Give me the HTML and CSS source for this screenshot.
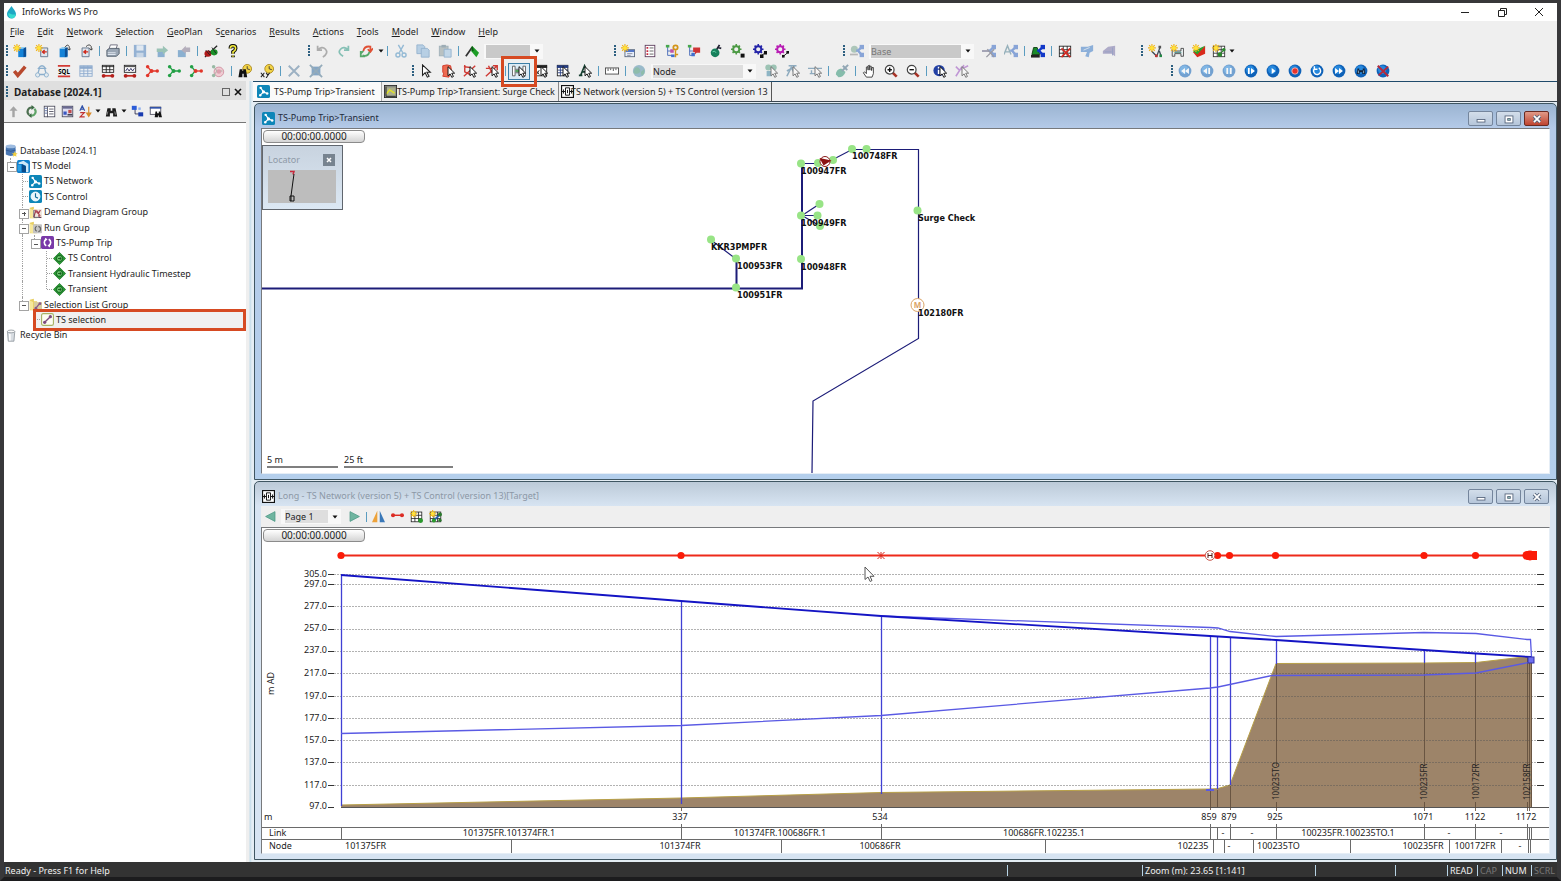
FILE: index.html
```html
<!DOCTYPE html>
<html lang="en">
<head>
<meta charset="utf-8">
<title>InfoWorks WS Pro</title>
<link rel="stylesheet" href="styles.css">
</head>
<body>
<svg class="defs" aria-hidden="true">
  <defs>
    <symbol id="p-star" viewBox="0 0 16 16"><path d="M4.500 0v9M0 4.500h9M1.300 1.300l6.400 6.400M7.700 1.300L1.300 7.700" stroke="#f0b418" stroke-width="1.300"/><circle cx="4.500" cy="4.500" r="2.300" fill="#ffe23a"/></symbol>
    <symbol id="p-cur" viewBox="0 0 16 16"><path d="M8 3v10.500l2.400-2.200 1.900 3.900 1.900-.9-1.900-3.800h3.300z" fill="#fff" stroke="#111" stroke-width="1.100"/></symbol>
    <symbol id="p-cyl" viewBox="0 0 16 16"><path d="M6 5h9v10H6z" fill="#1583d8"/><path d="M6 5l3-1.500h6L12 5z" fill="#8fd0f5"/><path d="M12 5l3-1.500V14l-3 1z" fill="#0b4f96"/></symbol>
    <symbol id="p-box" viewBox="0 0 16 16"><path d="M6.500 4.500h8v10h-8z" fill="#dfe6ee" stroke="#5b6f86"/><path d="M8.500 9h5M11 7l-2.500 2L11 11" stroke="#d02a1c" stroke-width="1.500" fill="none"/></symbol>
    <symbol id="p-dumb" viewBox="0 0 16 16"><path d="M3 13.500h10" stroke="#c92a22" stroke-width="2"/><circle cx="3" cy="13.500" r="2.200" fill="#b3201c"/><circle cx="13" cy="13.500" r="2.200" fill="#b3201c"/></symbol>
    <symbol id="p-share" viewBox="0 0 16 16"><path d="M14 3L9 7.500l5 5.500M9 7.500h-2" stroke="currentColor" stroke-width="2.600" fill="none"/><rect x="11" y="1" width="5" height="5" fill="currentColor"/><rect x="11" y="10" width="5" height="5" fill="currentColor"/></symbol>
    <symbol id="p-gear" viewBox="0 0 16 16"><circle cx="6" cy="6" r="3.500" fill="none" stroke="currentColor" stroke-width="2.200"/><path d="M6 0v3M6 9v3M0 6h3M9 6h3M1.800 1.800l2 2M8.200 8.200l2 2M10.200 1.800l-2 2M1.800 10.200l2-2" stroke="currentColor" stroke-width="1.800"/></symbol>
    <symbol id="p-grid" viewBox="0 0 16 16"><rect x="1.500" y="2.500" width="13" height="12" fill="#fff" stroke="currentColor"/><path d="M1.500 6.500h13M1.500 10.500h13M6 2.500v12M10.500 2.500v12" stroke="currentColor"/></symbol>
    <symbol id="p-bino" viewBox="0 0 16 16"><path d="M3 4h4v3h2V4h4l2 10h-5v-4H6v4H1z" fill="#1c1c1c"/><path d="M3.500 8l-1 4M12 8l.8 4" stroke="#9a9a9a"/></symbol>
    <symbol id="p-ball" viewBox="0 0 16 16"><circle cx="8" cy="8" r="7.300" fill="#0f62b8"/><circle cx="7" cy="6.500" r="4.800" fill="#2688dd"/></symbol>

    <symbol id="i-drop" viewBox="0 0 16 16"><path d="M8 0c2 3.500 5.500 6 5.500 10A5.500 5.500 0 0 1 2.500 10C2.500 6 6 3.500 8 0z" fill="#1fa8c4"/><path d="M4 9c2-1 5 3 9 1a5.400 5.400 0 0 1-3 5c-4 1-6-2-6-6z" fill="#36dcd0"/></symbol>
    <symbol id="i-newdb" viewBox="0 0 16 16"><use href="#p-cyl"/><use href="#p-star"/></symbol>
    <symbol id="i-newbox" viewBox="0 0 16 16"><use href="#p-box"/><use href="#p-star"/></symbol>
    <symbol id="i-opendb" viewBox="0 0 16 16"><use href="#p-cyl" x="-3"/><path d="M9 4q3-5 5-1v4M12 5l2 2 2-2" stroke="#333" fill="none"/></symbol>
    <symbol id="i-openbox" viewBox="0 0 16 16"><use href="#p-box" x="-3"/><path d="M8 3q4-4 6 0v4M12 5l2 2 2-2" stroke="#333" fill="none"/></symbol>
    <symbol id="i-print" viewBox="0 0 16 16"><path d="M5 1h8l-2 6H3z" fill="#fff" stroke="#667"/><path d="M1 7l3-2h11v6l-3 3H1z" fill="#9aa6b4" stroke="#4c5866"/><path d="M2 10h9M2 12h9" stroke="#e8eef6"/></symbol>
    <symbol id="i-save" viewBox="0 0 16 16"><rect x="1" y="1" width="14" height="14" fill="#4a80bd"/><rect x="4" y="1.500" width="8" height="6" fill="#d4e3f3"/><rect x="4" y="10" width="8" height="5" fill="#a9c2df"/></symbol>
    <symbol id="i-imp" viewBox="0 0 16 16"><path d="M3 7h8v8H3z" fill="#3b7db8"/><path d="M2 5h7V2l6 5-6 5V9H2z" fill="#58a089"/></symbol>
    <symbol id="i-exp" viewBox="0 0 16 16"><path d="M1 7h9v8H1z" fill="#3b7db8"/><path d="M15 4h-5V2L5 7l5 4V9h5z" fill="#857a92"/></symbol>
    <symbol id="i-plug" viewBox="0 0 16 16"><path d="M1 15L15 2" stroke="#222" stroke-width="1.500"/><ellipse cx="4.500" cy="11" rx="4" ry="3.500" fill="#b01818"/><ellipse cx="11.500" cy="9.500" rx="4" ry="3.500" fill="#1a9128"/><path d="M2 7l5 6M9 4l5 7M5 7l3 4" stroke="#222"/></symbol>
    <symbol id="i-help" viewBox="0 0 16 16"><path d="M5 5q0-3 3-3t3 3q0 2-3 4v2M8 13v2" stroke="#111" stroke-width="4.200" fill="none"/><path d="M5 5q0-3 3-3t3 3q0 2-3 4v2M8 13v1.500" stroke="#f5ec3a" stroke-width="1.800" fill="none"/></symbol>
    <symbol id="i-undo" viewBox="0 0 16 16"><path d="M3 2v5h5M3 7q5-5 9-1t-3 9" stroke="currentColor" stroke-width="2" fill="none"/></symbol>
    <symbol id="i-redo" viewBox="0 0 16 16"><path d="M13 2v5H8M13 7Q8 2 4 6t3 8" stroke="currentColor" stroke-width="2" fill="none"/></symbol>
    <symbol id="i-undoredo" viewBox="0 0 16 16"><path d="M5 8q1-6 8-5v5M10 6l3 3 3-4" stroke="#e05035" stroke-width="2" fill="none"/><path d="M12 9q-2 6-8 4M2 8v6h5M2 11l3-3" stroke="#56a96a" stroke-width="2" fill="none"/></symbol>
    <symbol id="i-cut" viewBox="0 0 16 16"><path d="M5 1l5 9M11 1L6 10" stroke="#4a8fc0" stroke-width="1.600"/><circle cx="4.500" cy="12.500" r="2.300" fill="none" stroke="#4a8fc0" stroke-width="1.600"/><circle cx="11.500" cy="12.500" r="2.300" fill="none" stroke="#4a8fc0" stroke-width="1.600"/></symbol>
    <symbol id="i-copy" viewBox="0 0 16 16"><path d="M1 1h7l2 2v8H1z" fill="#8bb6dc" stroke="#4a80b4"/><path d="M6 5h7l2 2v8H6z" fill="#8bb6dc" stroke="#4a80b4"/></symbol>
    <symbol id="i-paste" viewBox="0 0 16 16"><rect x="1.500" y="2.500" width="10" height="11" fill="#8e9c9c" stroke="#5f7f8f"/><rect x="4" y="1" width="5" height="3" fill="#597787"/><path d="M7 6h8v9H7z" fill="#9cc3e2" stroke="#4a80b4"/></symbol>
    <symbol id="i-peak" viewBox="0 0 16 16"><path d="M1 14L8 4" stroke="#333" stroke-width="2"/><path d="M8 2l8 8-3 5-6-7z" fill="#1d9d26"/><path d="M8 3l1 5" stroke="#0b5b12" stroke-width="2"/></symbol>
    <symbol id="i-starwin" viewBox="0 0 16 16"><rect x="4.500" y="6.500" width="11" height="8" fill="#e6eefa" stroke="#56657c"/><path d="M5 8h10" stroke="#3f66c0" stroke-width="2"/><path d="M7 11h6M7 13h4" stroke="#889"/><use href="#p-star"/></symbol>
    <symbol id="i-form" viewBox="0 0 16 16"><rect x="2.500" y="1.500" width="11" height="13" fill="#fff" stroke="#5a3a5a"/><path d="M4 4.500h2M4 8h2M4 11.500h2" stroke="#c7283c" stroke-width="2"/><path d="M7.500 4.500h4.500M7.500 8h4.500M7.500 11.500h4.500" stroke="#555"/></symbol>
    <symbol id="i-treekey" viewBox="0 0 16 16"><path d="M3 3v10h5M3 8h4" stroke="#4468b8" fill="none"/><rect x="1" y="1" width="4" height="3" fill="#46a84c"/><rect x="6" y="6" width="4" height="4" fill="#c052a8"/><rect x="7" y="12" width="4" height="3" fill="#3f6fd0"/><circle cx="12" cy="4" r="2.500" fill="none" stroke="#d39418" stroke-width="2"/><path d="M12 7v8M12 12h3" stroke="#d39418" stroke-width="1.600"/></symbol>
    <symbol id="i-treered" viewBox="0 0 16 16"><path d="M3 3v10h5M3 8h4" stroke="#4468b8" fill="none"/><rect x="1" y="1" width="4" height="3" fill="#46a84c"/><rect x="5" y="10" width="4" height="4" fill="#3f6fd0"/><path d="M7 4h8v6h-4l-2 2V9H7z" fill="#cf3434"/></symbol>
    <symbol id="i-flask" viewBox="0 0 16 16"><circle cx="7" cy="10" r="5" fill="#17805c"/><path d="M9 6l3-5M10 4l4 1" stroke="#223" stroke-width="2"/><path d="M4 9q3-2 4 1" stroke="#6ee0b4" fill="none"/></symbol>
    <symbol id="i-gear1" viewBox="0 0 16 16"><use href="#p-gear" color="#4c9a44"/><rect x="11" y="11" width="4.500" height="4.500" fill="#111"/></symbol>
    <symbol id="i-gear2" viewBox="0 0 16 16"><use href="#p-gear" color="#2424a8"/><path d="M9 13.500l6-4" stroke="#111"/><rect x="8" y="12" width="4" height="4" fill="#111"/><rect x="12.500" y="8" width="3.500" height="4" fill="#111"/></symbol>
    <symbol id="i-gear3" viewBox="0 0 16 16"><use href="#p-gear" color="#b81cb4"/><path d="M9 14.500l6-5" stroke="#111"/><rect x="8" y="12.500" width="3" height="3" fill="#111"/><rect x="13" y="8" width="3" height="3" fill="#111"/></symbol>
    <symbol id="i-sc1" viewBox="0 0 16 16"><circle cx="5" cy="6" r="4" fill="#76a58e"/><path d="M0 12h9" stroke="#888" stroke-width="2"/><use href="#p-share" color="#3468c4"/></symbol>
    <symbol id="i-sc2" viewBox="0 0 16 16"><path d="M0 8h8" stroke="#557" stroke-width="2"/><use href="#p-share" color="#3468c4"/><path d="M6 6l8 9M14 6l-9 9" stroke="#556" stroke-width="1.500"/></symbol>
    <symbol id="i-sc3" viewBox="0 0 16 16"><path d="M0 12L4 2l4 10M2 9h5" stroke="#4f7f92" stroke-width="1.600" fill="none"/><use href="#p-share" color="#3468c4"/></symbol>
    <symbol id="i-sc4" viewBox="0 0 16 16"><path d="M1 12l2-8h4l3 8z" fill="#1a8a2a" stroke="#0b3c10"/><path d="M0 14h10" stroke="#222" stroke-width="3"/><use href="#p-share" color="#1238c8"/></symbol>
    <symbol id="i-gridx" viewBox="0 0 16 16"><use href="#p-grid" color="#222"/><path d="M4 5l10 10M14 5L4 15" stroke="#d32a22" stroke-width="2"/></symbol>
    <symbol id="i-brush1" viewBox="0 0 16 16"><path d="M1 3h8l6-2v7l-4 2-1 5-4-1 2-5H1z" fill="#3c7cc8"/><path d="M4 7l7-3" stroke="#cde"/></symbol>
    <symbol id="i-brush2" viewBox="0 0 16 16"><path d="M1 8l6-5 8-1v12l-4-3H1z" fill="#7a74aa"/><path d="M3 9h8M12 4v9" stroke="#4f62a2"/></symbol>
    <symbol id="i-starv" viewBox="0 0 16 16"><path d="M4 8l6 6 4-11M13 8l2 6" stroke="#3c4c58" stroke-width="1.500" fill="none"/><rect x="12" y="2" width="3" height="3" fill="#555"/><rect x="8" y="12" width="3" height="3" fill="#b33"/><rect x="13" y="12" width="3" height="3" fill="#284"/><use href="#p-star"/></symbol>
    <symbol id="i-starpipe" viewBox="0 0 16 16"><path d="M2.500 6v8h3v-3h7v3h3V5h-3v3h-7V6z" stroke="#444" fill="#e8eef0"/><path d="M5 9.500h8" stroke="#2a7a70"/><use href="#p-star"/></symbol>
    <symbol id="i-starleaf" viewBox="0 0 16 16"><path d="M1 9l5 6 9-4V2l-7 6z" fill="#d92a1c"/><path d="M1 8l5 4 9-10-7 3z" fill="#2aa32c"/><use href="#p-star"/></symbol>
    <symbol id="i-stargrid" viewBox="0 0 16 16"><use href="#p-grid" color="#333"/><path d="M10 10l4-3" stroke="#161" stroke-width="1"/><circle cx="9" cy="12" r="2.500" fill="#2a8a2c"/><circle cx="13.500" cy="6.500" r="2" fill="#2a8a2c"/><use href="#p-star"/></symbol>
    <symbol id="i-stargrid1" viewBox="0 0 16 16"><use href="#p-grid" color="#222"/><circle cx="13" cy="13" r="3" fill="#2a9a2c"/><use href="#p-star"/></symbol>
    <symbol id="i-stargrid2" viewBox="0 0 16 16"><use href="#p-grid" color="#222"/><path d="M6 13l7-7" stroke="#2a62b0" stroke-width="2.500"/><circle cx="6" cy="13" r="2.500" fill="#2a9a2c"/><circle cx="13.500" cy="5.500" r="2.500" fill="#2a7a2c"/><circle cx="13.500" cy="12.500" r="2" fill="#2a7a2c"/><use href="#p-star"/></symbol>

    <symbol id="i-check" viewBox="0 0 16 16"><path d="M1.500 8l4 5L14 3" stroke="#b8492e" stroke-width="4" fill="none"/></symbol>
    <symbol id="i-trinode" viewBox="0 0 16 16"><path d="M5 5L3 12h10L11 5zM4 5q4-6 8 0z" stroke="#3a7ab0" stroke-width="1.500" fill="none"/><circle cx="3" cy="12.500" r="2.400" fill="#dbe9f2" stroke="#3a7ab0"/><circle cx="13" cy="12.500" r="2.400" fill="#dbe9f2" stroke="#3a7ab0"/></symbol>
    <symbol id="i-sql" viewBox="0 0 16 16"><path d="M1 2h14M1 14h14" stroke="#d23a34" stroke-width="2"/><text x="8" y="11" text-anchor="middle" class="glyph7">SQL</text></symbol>
    <symbol id="i-table" viewBox="0 0 16 16"><rect x="1" y="2" width="14" height="12" fill="#e6eff8" stroke="#3f74b4"/><path d="M1 4h14" stroke="#3f74b4" stroke-width="3"/><path d="M1 8h14M1 11h14M5.500 2v12M10 2v12" stroke="#3f74b4"/></symbol>
    <symbol id="i-griddumb" viewBox="0 0 16 16"><rect x="1.500" y="1.500" width="13" height="8" fill="#fff" stroke="#222"/><path d="M1 3h14M2 6.500h12M6 2v8M10 2v8" stroke="#222"/><use href="#p-dumb"/></symbol>
    <symbol id="i-wavedumb" viewBox="0 0 16 16"><rect x="1.500" y="1.500" width="13" height="8" fill="#fff" stroke="#222"/><path d="M2 3h12" stroke="#222"/><path d="M3 8l2-3 2 3 2-3 2 3 2-3" stroke="#225" fill="none"/><use href="#p-dumb"/></symbol>
    <symbol id="i-nodesr" viewBox="0 0 16 16"><path d="M3 3l4 5-4 5M7 8h7" stroke="#e2362a" stroke-width="1.500" fill="none"/><g fill="#e2362a"><circle cx="3" cy="3" r="2"/><circle cx="3" cy="13" r="2"/><circle cx="7.500" cy="8" r="2.200"/><circle cx="14" cy="8" r="2"/></g></symbol>
    <symbol id="i-nodesg" viewBox="0 0 16 16"><path d="M3 3l4 5-4 5M7 8h7" stroke="#22a045" stroke-width="1.500" fill="none"/><g fill="#22a045"><circle cx="3" cy="3" r="2"/><circle cx="3" cy="13" r="2"/><circle cx="7.500" cy="8" r="2.200"/><circle cx="14" cy="8" r="2"/></g></symbol>
    <symbol id="i-nodesm" viewBox="0 0 16 16"><path d="M3 3l4 5-4 5" stroke="#22a045" stroke-width="1.500" fill="none"/><path d="M7 8h7" stroke="#e2362a" stroke-width="1.500"/><g fill="#22a045"><circle cx="3" cy="3" r="2"/><circle cx="3" cy="13" r="2"/></g><g fill="#e2362a"><circle cx="7.500" cy="8" r="2.200"/><circle cx="14" cy="8" r="2"/></g></symbol>
    <symbol id="i-pink" viewBox="0 0 16 16"><circle cx="9" cy="9" r="5.500" fill="#f0cbd2" stroke="#cf8f9f"/><path d="M3 3l4 5-4 5M7 8h6" stroke="#9fae9f" fill="none"/><g fill="#98b9a4"><circle cx="3" cy="3" r="2"/><circle cx="3" cy="13" r="2"/></g><circle cx="9" cy="8.500" r="2.500" fill="#db9fae"/></symbol>
    <symbol id="i-binoclock" viewBox="0 0 16 16"><circle cx="10.500" cy="5.500" r="5" fill="#f3d447" stroke="#a8851a"/><path d="M10.500 2.500v3l3 1" stroke="#333" fill="none"/><path d="M2 6h3v2h1V6h3l1.500 9H6.500v-4H5v4H.5z" fill="#111"/></symbol>
    <symbol id="i-xyclock" viewBox="0 0 16 16"><circle cx="10.500" cy="5.500" r="5" fill="#f3d447" stroke="#a8851a"/><path d="M10.500 2.500v3l3 1" stroke="#333" fill="none"/><path d="M1 10l4 5M5 10l-4 5M7 10l2 3M11 10l-4 6" stroke="#222" stroke-width="1.200"/></symbol>
    <symbol id="i-x" viewBox="0 0 16 16"><path d="M2 2l12 12M14 2L2 14" stroke="#5a7fa0" stroke-width="2.200"/></symbol>
    <symbol id="i-xsq" viewBox="0 0 16 16"><rect x="3" y="3" width="10" height="10" fill="#2f6ca4"/><path d="M1 1l14 14M15 1L1 15" stroke="#4a7490" stroke-width="2"/></symbol>
    <symbol id="i-cursor" viewBox="0 0 16 16"><path d="M4 1v12l3-3 2.500 5 2-1L9 9.500h4z" fill="#fff" stroke="#222" stroke-width="1.200"/></symbol>
    <symbol id="i-selpoly" viewBox="0 0 16 16"><path d="M2 2q5-2 9 0l1 5-3 8-7-1q2-3 0-5z" fill="#ee6a50" stroke="#cf3424"/><use href="#p-cur"/></symbol>
    <symbol id="i-sell1" viewBox="0 0 16 16"><path d="M1 14L14 2M1 3l7 1M2 1v8l6 3" stroke="#cf3a34" stroke-width="1.600" fill="none"/><use href="#p-cur"/></symbol>
    <symbol id="i-sell2" viewBox="0 0 16 16"><path d="M1 14L14 2M1 5h7M4 2l4 8M9 2h5v5" stroke="#cf3a34" stroke-width="1.600" fill="none"/><use href="#p-cur"/></symbol>
    <symbol id="i-long" viewBox="0 0 16 16"><path d="M.5 2.500h3v11h-3zM12.500 2.500h3v11h-3z" fill="#fff" stroke="#555"/><path d="M4 6h8M4 10h8" stroke="#555"/><path d="M4 8h8" stroke="#3d9a46" stroke-width="2"/><use href="#p-cur"/></symbol>
    <symbol id="i-gridcur" viewBox="0 0 16 16"><rect x="1.500" y="1.500" width="13" height="12" fill="#fff" stroke="#222"/><path d="M1 3h14" stroke="#222" stroke-width="3"/><path d="M3 8l3 4M6 7l-3 5" stroke="#222"/><use href="#p-cur"/></symbol>
    <symbol id="i-tabcur" viewBox="0 0 16 16"><rect x="1.500" y="1.500" width="12" height="12" fill="#fff" stroke="#222"/><path d="M1 3h13" stroke="#253c80" stroke-width="3"/><path d="M2 7h12M2 10h12M5 2v12M9 2v12" stroke="#253c80"/><use href="#p-cur"/></symbol>
    <symbol id="i-acur" viewBox="0 0 16 16"><path d="M1 13h4M3 13L7.500 2 12 13M5 9h5" stroke="#163f30" stroke-width="1.800" fill="none"/><use href="#p-cur"/></symbol>
    <symbol id="i-ruler" viewBox="0 0 16 16"><rect x="0.500" y="4.500" width="15" height="7" fill="#fff" stroke="#444"/><path d="M3.500 5v3M6.500 5v2M9.500 5v3M12.500 5v2" stroke="#444"/></symbol>
    <symbol id="i-globe" viewBox="0 0 16 16"><circle cx="8" cy="8" r="7" fill="#5590ac"/><path d="M3 5q4-3 6 1t-3 5-4-3zM10 9l4-3v5l-3 2z" fill="#3f9474"/></symbol>
    <symbol id="i-t1" viewBox="0 0 16 16"><circle cx="5" cy="4" r="3.500" fill="#5aa084"/><circle cx="11" cy="4" r="3.500" fill="#5aa084"/><rect x="3" y="8" width="6" height="6" fill="#3f86a4"/><use href="#p-cur"/></symbol>
    <symbol id="i-t2" viewBox="0 0 16 16"><path d="M1 14L6 4l4 7M3 2h9M1 8l9-5" stroke="#3f7498" stroke-width="1.800" fill="none"/><use href="#p-cur"/></symbol>
    <symbol id="i-t3" viewBox="0 0 16 16"><path d="M0 5h16M2 11h8M4 11V7" stroke="#3f7498" stroke-width="1.600"/><use href="#p-cur"/></symbol>
    <symbol id="i-clean" viewBox="0 0 16 16"><path d="M1 12q0-6 6-7l5 4q-2 6-8 6z" fill="#2f9474"/><path d="M8 8l7-7M9 2l5 5" stroke="#456c84" stroke-width="2.200"/></symbol>
    <symbol id="i-hand" viewBox="0 0 16 16"><path d="M5 15l-3.500-5 1.500-1 2 2V3.500l1.500-.5.500 4V2l1.500-.5L9 7V2.500l1.500 0L11 7.500 11.500 4H13v7l-1.500 4z" fill="#fff" stroke="#333"/></symbol>
    <symbol id="i-zin" viewBox="0 0 16 16"><path d="M9.500 9.500l5 5" stroke="#a83226" stroke-width="3"/><circle cx="6.500" cy="6.500" r="5" fill="#fff" stroke="#444" stroke-width="1.400"/><path d="M4 6.500h5M6.500 4v5" stroke="#111" stroke-width="1.600"/></symbol>
    <symbol id="i-zout" viewBox="0 0 16 16"><path d="M9.500 9.500l5 5" stroke="#a83226" stroke-width="3"/><circle cx="6.500" cy="6.500" r="5" fill="#fff" stroke="#444" stroke-width="1.400"/><path d="M4 6.500h5" stroke="#111" stroke-width="1.600"/></symbol>
    <symbol id="i-info" viewBox="0 0 16 16"><circle cx="7" cy="7.500" r="6.500" fill="#2340a4"/><path d="M6.500 3v2M6.500 6.500v5" stroke="#fff" stroke-width="2"/><use href="#p-cur"/></symbol>
    <symbol id="i-purp" viewBox="0 0 16 16"><path d="M1 14L8 3M1 3l4 4M10 1l-2 6M9 5l6-3" stroke="#9a4fc0" stroke-width="1.800"/><use href="#p-cur"/></symbol>
    <symbol id="i-rw" viewBox="0 0 16 16"><use href="#p-ball"/><path d="M8 4.500v7L3.500 8zM12.500 4.500v7L8 8z" fill="#fff"/></symbol>
    <symbol id="i-bk" viewBox="0 0 16 16"><use href="#p-ball"/><path d="M8 4.500v7L3.500 8zM9.500 4.500h2v7h-2z" fill="#fff"/></symbol>
    <symbol id="i-pause" viewBox="0 0 16 16"><use href="#p-ball"/><path d="M5 4.500h2v7H5zM9 4.500h2v7H9z" fill="#fff"/></symbol>
    <symbol id="i-step" viewBox="0 0 16 16"><use href="#p-ball"/><path d="M4.500 4.500h2v7h-2zM8 4.500v7L12.500 8z" fill="#fff"/></symbol>
    <symbol id="i-play" viewBox="0 0 16 16"><use href="#p-ball"/><path d="M6.500 4.500v7L11 8z" fill="#fff"/></symbol>
    <symbol id="i-rec" viewBox="0 0 16 16"><use href="#p-ball"/><circle cx="8" cy="8" r="3.600" fill="#e8332c" stroke="#f7b8b4"/></symbol>
    <symbol id="i-loop" viewBox="0 0 16 16"><use href="#p-ball"/><path d="M10 4.500A4 4 0 1 1 5 5.500M5 2.500v3.500h3.500" stroke="#fff" stroke-width="1.600" fill="none"/></symbol>
    <symbol id="i-ff" viewBox="0 0 16 16"><use href="#p-ball"/><path d="M3.500 4.500v7L8 8zM8 4.500v7L12.500 8z" fill="#fff"/></symbol>
    <symbol id="i-find" viewBox="0 0 16 16"><use href="#p-ball"/><path d="M4 5h2v2h4V5h2l1 6.500H9.500V9.500h-3v2H3z" fill="#14243c"/><path d="M5 7.500v3M11 7.500v3" stroke="#9bc"/></symbol>
    <symbol id="i-stop" viewBox="0 0 16 16"><use href="#p-ball"/><path d="M2 2l12 12M14 3L3 13" stroke="#b52a3c" stroke-width="2.200"/></symbol>

    <symbol id="i-up" viewBox="0 0 16 16"><path d="M8 15V6" stroke="#a5a5a5" stroke-width="3"/><path d="M3 7l5-5.500L13 7z" fill="#a5a5a5"/></symbol>
    <symbol id="i-refresh" viewBox="0 0 16 16"><path d="M9 3.200A5 5 0 0 0 5 12" stroke="#4d6f50" stroke-width="2.600" fill="none"/><path d="M7 13A5 5 0 0 0 11.500 4.500" stroke="#5fa468" stroke-width="2.600" fill="none"/><path d="M8 0l4 3-4 3zM8 10l-4 3 4 3z" fill="#3c6a44"/></symbol>
    <symbol id="i-list" viewBox="0 0 16 16"><rect x="1.500" y="1.500" width="13" height="13" fill="#fff" stroke="#445"/><path d="M5.500 2v13M7.500 5h5.500M7.500 8h5.500M7.500 11h5.500" stroke="#445"/><path d="M2 4h3M2 7h3M2 10h3" stroke="#4a62a0"/></symbol>
    <symbol id="i-cal" viewBox="0 0 16 16"><rect x="1.500" y="1.500" width="13" height="13" fill="#dcdcf0" stroke="#445"/><path d="M2 3h12" stroke="#6a6a90" stroke-width="3"/><path d="M3 8h4v4H3z" fill="#3a58c0"/><path d="M9 6h4v4H9z" fill="#c04a4a"/><path d="M8 12h6" stroke="#445" stroke-width="2"/></symbol>
    <symbol id="i-sort" viewBox="0 0 16 16"><path d="M1 7l3-6 3 6M2 5h4" stroke="#2f50a8" stroke-width="1.400" fill="none"/><path d="M1.500 9.500h5l-5 5h5.500" stroke="#c03434" stroke-width="1.500" fill="none"/><path d="M12 2v10M9.500 10l2.500 4 2.500-4z" stroke="#d88a2a" stroke-width="1.400" fill="#d88a2a"/></symbol>
    <symbol id="i-tree2" viewBox="0 0 16 16"><path d="M5 5v6h5" stroke="#224" fill="none"/><rect x="1" y="1" width="6" height="5" fill="#2a5cd8"/><rect x="9" y="3" width="3" height="3" fill="#8fb0ee"/><rect x="9" y="9" width="6" height="5" fill="#1a3cb0"/></symbol>
    <symbol id="i-findwin" viewBox="0 0 16 16"><rect x="1.500" y="2.500" width="13" height="9" fill="#fff" stroke="#445"/><path d="M1 3.500h14" stroke="#2f50a8" stroke-width="2"/><path d="M8 8h2v2h2V8h2l2 7h-4v-2h-1v2H7z" fill="#111"/></symbol>

    <symbol id="i-net" viewBox="0 0 16 16"><rect width="16" height="16" rx="2" fill="#0e86b8"/><path d="M4.500 3.500L8 8.500l-4 4M8 8.500l4.500 2" stroke="#fff" stroke-width="1.500" fill="none"/><g fill="#fff"><circle cx="4.500" cy="3.500" r="1.500"/><circle cx="4" cy="12.500" r="1.500"/><circle cx="8" cy="8.500" r="2"/><circle cx="12.500" cy="10.500" r="1.600"/></g></symbol>
    <symbol id="i-surge" viewBox="0 0 16 16"><rect x="0.500" y="0.500" width="15" height="15" fill="#888a80" stroke="#222"/><rect x="3" y="3" width="11" height="10" fill="#aeb08c"/><path d="M3 11l4-5 3 2 3 2" stroke="#e6e620" stroke-width="1.700" fill="none"/><path d="M2.500 2v12h12" stroke="#222" fill="none"/></symbol>
    <symbol id="i-section" viewBox="0 0 16 16"><rect x="0.700" y="0.700" width="14.600" height="14.600" fill="#fff" stroke="#111" stroke-width="1.400"/><path d="M5.500 3.500h5v9h-5zM1 8h4M11 8h4" stroke="#111" stroke-width="1.200" fill="none"/><path d="M3 5.500v5M13 5.500v5M8 6v4" stroke="#111" stroke-width="1.200"/></symbol>
    <symbol id="i-database" viewBox="0 0 16 16"><path d="M1 3v10q6 3.500 12 0V3z" fill="#4a78b4"/><ellipse cx="7" cy="3" rx="6" ry="2.300" fill="#9dbbe0"/><path d="M1 7.500q6 3 12 0" stroke="#2d5690" fill="none"/><path d="M12 9l1 2.300 2.500.2-1.900 1.700.6 2.500-2.200-1.300-2.200 1.300.6-2.500L8.500 11.500l2.500-.2z" fill="#f2cf3c"/></symbol>
    <symbol id="i-model" viewBox="0 0 16 16"><rect width="16" height="16" rx="2" fill="#1180cc"/><path d="M2 3l6-2 6 4v10h-3V7L6 5H2z" fill="#cfe8f8"/><path d="M6 5l5 3v7H6z" fill="#0a4a88"/><path d="M1 6h4v8H1z" fill="#2c9fe4"/></symbol>
    <symbol id="i-clock" viewBox="0 0 16 16"><rect width="16" height="16" rx="2" fill="#0e86b8"/><circle cx="8" cy="8" r="5.500" fill="#e8f6fc" stroke="#fff"/><path d="M8 4v4.500l3 1.500" stroke="#0e6a98" stroke-width="1.400" fill="none"/></symbol>
    <symbol id="i-fold" viewBox="0 0 16 16"><path d="M1 2l5-1v3h4v11H1z" fill="#e8cf62"/><path d="M1 3l4 2v10l-4-1z" fill="#f6e79a"/></symbol>
    <symbol id="i-folddem" viewBox="0 0 16 16"><use href="#i-fold"/><rect x="5" y="4" width="11" height="11" fill="#efe6dc"/><path d="M6 14q2-9 4-8t2 5 3 3M7 5l7 7M14 5l-2 4" stroke="#a83848" stroke-width="1.300" fill="none"/><path d="M6 5v9h9" stroke="#445" fill="none"/></symbol>
    <symbol id="i-foldrun" viewBox="0 0 16 16"><use href="#i-fold"/><rect x="5" y="4" width="11" height="11" rx="1" fill="#c4c4c4"/><path d="M9.500 6.500a3.300 3.300 0 0 0 0 6M11.500 13a3.300 3.300 0 0 0 0-6.500" stroke="#666" stroke-width="1.500" fill="none"/></symbol>
    <symbol id="i-foldsel" viewBox="0 0 16 16"><use href="#i-fold"/><rect x="6" y="5" width="10" height="10" fill="#d8cda0"/><path d="M8 13l5-6" stroke="#8a5a88" stroke-width="1.600"/><circle cx="8.500" cy="12.500" r="1.700" fill="#8a5a88"/><circle cx="13.500" cy="7" r="1.700" fill="#8a5a88"/></symbol>
    <symbol id="i-run" viewBox="0 0 16 16"><rect width="16" height="16" rx="2" fill="#7a3aa8"/><path d="M6.500 4a4.500 4.500 0 0 0 0 8M9.500 12a4.500 4.500 0 0 0 0-8" stroke="#fff" stroke-width="2" fill="none"/><path d="M5 2l3 2-3 2.500zM11 9.500L8 12l3 2z" fill="#fff"/></symbol>
    <symbol id="i-sim" viewBox="0 0 16 16"><path d="M8 .5L15.500 8 8 15.500.5 8z" fill="#2b9a35" stroke="#1c7a26"/><circle cx="8" cy="8" r="3.800" fill="#6fca70" stroke="#0c5a18" stroke-width="1.200"/><path d="M6 8h4M8 6l2.200 2L8 10" stroke="#0c4814" fill="none"/></symbol>
    <symbol id="i-sel" viewBox="0 0 16 16"><rect x="0.700" y="0.700" width="14.600" height="14.600" rx="2" fill="#fdfdf4" stroke="#a8b468" stroke-width="1.400"/><path d="M4.500 11.500l7-7" stroke="#7a4a80" stroke-width="1.700"/><circle cx="4.500" cy="11.500" r="2" fill="#7a4a80"/><circle cx="11.500" cy="4.500" r="2" fill="#7a4a80"/></symbol>
    <symbol id="i-bin" viewBox="0 0 16 16"><path d="M3 3l1 12h7l1-12z" fill="#d8dde2" stroke="#8c949a"/><ellipse cx="7.500" cy="3" rx="4.500" ry="1.700" fill="#fafafa" stroke="#8c949a"/><path d="M5 6h2v8H5z" fill="#fff"/></symbol>
    <symbol id="i-flip" viewBox="0 0 16 16"><path d="M6.500 1v14H0z" fill="#eda23a"/><path d="M9.500 1v14H16z" fill="#3a78b8"/></symbol>
    <symbol id="i-span" viewBox="0 0 16 16"><path d="M2 6.500h12" stroke="#dc2c24" stroke-width="1.800"/><circle cx="2.500" cy="6.500" r="2.500" fill="#dc2c24"/><circle cx="13.500" cy="6.500" r="2.500" fill="#dc2c24"/></symbol>
    <symbol id="i-prev" viewBox="0 0 16 16"><path d="M13.500 2v12L2 8z" fill="#6fb5a0" stroke="#4f9a88"/></symbol>
    <symbol id="i-next" viewBox="0 0 16 16"><path d="M2.500 2v12L14 8z" fill="#6fb5a0" stroke="#4f9a88"/></symbol>
    <symbol id="i-down" viewBox="0 0 8 8"><path d="M1.500 2.500h5L4 5.500z" fill="#111"/></symbol>
    <symbol id="i-min" viewBox="0 0 16 16"><rect x="3.500" y="8.500" width="9" height="3" fill="#fff" stroke="#56657c"/></symbol>
    <symbol id="i-max" viewBox="0 0 16 16"><rect x="3.500" y="4.500" width="9" height="8" fill="#fff" stroke="#56657c"/><rect x="6.500" y="7.500" width="3" height="2" fill="#9cb" stroke="#56657c"/></symbol>
    <symbol id="i-close" viewBox="0 0 16 16"><path d="M4.500 4.500l7 7M11.500 4.500l-7 7" stroke="#56657c" stroke-width="4"/><path d="M4.500 4.500l7 7M11.500 4.500l-7 7" stroke="#fff" stroke-width="2"/></symbol>
  </defs>
</svg>

<div class="app">
  <header class="titlebar">
    <svg class="ico"><use href="#i-drop"/></svg>
    <h1>InfoWorks WS Pro</h1>
    <div class="caption">
      <button type="button" aria-label="Minimize"><svg viewBox="0 0 12 12"><path d="M2 6.500h8" stroke="#222"/></svg></button>
      <button type="button" aria-label="Restore"><svg viewBox="0 0 12 12"><path d="M2.500 4.500h6v6h-6zM4.500 4V2.500h6v6H9" stroke="#222" fill="none"/></svg></button>
      <button type="button" aria-label="Close"><svg viewBox="0 0 12 12"><path d="M2 2l8 8M10 2l-8 8" stroke="#222"/></svg></button>
    </div>
  </header>

  <nav class="menubar">
    <button type="button"><u>F</u>ile</button><button type="button"><u>E</u>dit</button><button type="button"><u>N</u>etwork</button><button type="button"><u>S</u>election</button><button type="button"><u>G</u>eoPlan</button><button type="button">S<u>c</u>enarios</button><button type="button"><u>R</u>esults</button><button type="button"><u>A</u>ctions</button><button type="button"><u>T</u>ools</button><button type="button"><u>M</u>odel</button><button type="button"><u>W</u>indow</button><button type="button"><u>H</u>elp</button>
  </nav>

  <div class="toolrow toolrow-top">
    <div class="group"><i class="grip"></i>
      <button type="button" class="tb" aria-label="New database"><svg><use href="#i-newdb"/></svg></button>
      <button type="button" class="tb" aria-label="New transportable database"><svg><use href="#i-newbox"/></svg></button>
      <button type="button" class="tb" aria-label="Open database"><svg><use href="#i-opendb"/></svg></button>
      <button type="button" class="tb" aria-label="Open transportable database"><svg><use href="#i-openbox"/></svg></button>
      <i class="sep"></i>
      <button type="button" class="tb" aria-label="Print"><svg><use href="#i-print"/></svg></button>
      <i class="sep"></i>
      <button type="button" class="tb dim" aria-label="Save"><svg><use href="#i-save"/></svg></button>
      <button type="button" class="tb dim" aria-label="Commit"><svg><use href="#i-imp"/></svg></button>
      <button type="button" class="tb dim" aria-label="Revert"><svg><use href="#i-exp"/></svg></button>
      <i class="sep"></i>
      <button type="button" class="tb" aria-label="Connections"><svg><use href="#i-plug"/></svg></button>
      <button type="button" class="tb" aria-label="Help topics"><svg><use href="#i-help"/></svg></button>
    </div>
    <div class="group"><i class="grip"></i>
      <button type="button" class="tb dim grey" aria-label="Undo"><svg><use href="#i-undo"/></svg></button>
      <button type="button" class="tb dim teal" aria-label="Redo"><svg><use href="#i-redo"/></svg></button>
      <button type="button" class="tb" aria-label="Undo history"><svg><use href="#i-undoredo"/></svg></button>
      <svg class="drop"><use href="#i-down"/></svg>
      <i class="sep"></i>
      <button type="button" class="tb dim" aria-label="Cut"><svg><use href="#i-cut"/></svg></button>
      <button type="button" class="tb dim" aria-label="Copy"><svg><use href="#i-copy"/></svg></button>
      <button type="button" class="tb dim" aria-label="Paste"><svg><use href="#i-paste"/></svg></button>
      <i class="sep"></i>
      <button type="button" class="tb" aria-label="Flags"><svg><use href="#i-peak"/></svg></button>
      <span class="combo combo-flag"><select aria-label="Flag"><option></option></select><svg class="drop"><use href="#i-down"/></svg></span>
    </div>
    <div class="group"><i class="grip"></i>
      <button type="button" class="tb" aria-label="New window"><svg><use href="#i-starwin"/></svg></button>
      <button type="button" class="tb" aria-label="Properties"><svg><use href="#i-form"/></svg></button>
      <button type="button" class="tb" aria-label="Layers and themes"><svg><use href="#i-treekey"/></svg></button>
      <button type="button" class="tb" aria-label="Locations"><svg><use href="#i-treered"/></svg></button>
      <button type="button" class="tb" aria-label="Water quality"><svg><use href="#i-flask"/></svg></button>
      <button type="button" class="tb" aria-label="Node tool"><svg><use href="#i-gear1"/></svg></button>
      <button type="button" class="tb" aria-label="Link tool"><svg><use href="#i-gear2"/></svg></button>
      <button type="button" class="tb" aria-label="Control tool"><svg><use href="#i-gear3"/></svg></button>
    </div>
    <div class="group"><i class="grip"></i>
      <button type="button" class="tb dim" aria-label="New scenario"><svg><use href="#i-sc1"/></svg></button>
      <span class="combo combo-wide combo-off"><select aria-label="Scenario"><option>Base</option></select><svg class="drop"><use href="#i-down"/></svg></span>
      <button type="button" class="tb dim" aria-label="Delete scenario"><svg><use href="#i-sc2"/></svg></button>
      <button type="button" class="tb dim" aria-label="Rename scenario"><svg><use href="#i-sc3"/></svg></button>
      <i class="sep"></i>
      <button type="button" class="tb" aria-label="Manage scenarios"><svg><use href="#i-sc4"/></svg></button>
      <i class="sep"></i>
      <button type="button" class="tb" aria-label="Clear grid"><svg><use href="#i-gridx"/></svg></button>
      <button type="button" class="tb dim" aria-label="Paint value"><svg><use href="#i-brush1"/></svg></button>
      <button type="button" class="tb dim" aria-label="Erase value"><svg><use href="#i-brush2"/></svg></button>
    </div>
    <div class="group"><i class="grip"></i>
      <button type="button" class="tb" aria-label="New network graph"><svg><use href="#i-starv"/></svg></button>
      <button type="button" class="tb" aria-label="New long section"><svg><use href="#i-starpipe"/></svg></button>
      <button type="button" class="tb" aria-label="New 3D view"><svg><use href="#i-starleaf"/></svg></button>
      <button type="button" class="tb tb-slim" aria-label="New grid"><svg><use href="#i-stargrid"/></svg></button>
      <svg class="drop"><use href="#i-down"/></svg>
    </div>
  </div>

  <div class="toolrow toolrow-mid">
    <div class="group"><i class="grip"></i>
      <button type="button" class="tb" aria-label="Validate"><svg><use href="#i-check"/></svg></button>
      <button type="button" class="tb dim" aria-label="Trace"><svg><use href="#i-trinode"/></svg></button>
      <button type="button" class="tb" aria-label="SQL query"><svg><use href="#i-sql"/></svg></button>
      <button type="button" class="tb dim" aria-label="Results table"><svg><use href="#i-table"/></svg></button>
      <button type="button" class="tb" aria-label="Selection grid"><svg><use href="#i-griddumb"/></svg></button>
      <button type="button" class="tb" aria-label="Selection graph"><svg><use href="#i-wavedumb"/></svg></button>
      <button type="button" class="tb" aria-label="Clear selection"><svg><use href="#i-nodesr"/></svg></button>
      <button type="button" class="tb" aria-label="Select all"><svg><use href="#i-nodesg"/></svg></button>
      <button type="button" class="tb" aria-label="Invert selection"><svg><use href="#i-nodesm"/></svg></button>
      <button type="button" class="tb" aria-label="Selection theme"><svg><use href="#i-pink"/></svg></button>
      <i class="sep"></i>
      <button type="button" class="tb" aria-label="Find time"><svg><use href="#i-binoclock"/></svg></button>
      <button type="button" class="tb" aria-label="Time graph"><svg><use href="#i-xyclock"/></svg></button>
      <i class="sep"></i>
      <button type="button" class="tb dim" aria-label="Delete"><svg><use href="#i-x"/></svg></button>
      <button type="button" class="tb dim" aria-label="Delete all"><svg><use href="#i-xsq"/></svg></button>
    </div>
    <div class="group"><i class="grip"></i>
      <button type="button" class="tb" aria-label="Select"><svg><use href="#i-cursor"/></svg></button>
      <button type="button" class="tb" aria-label="Polygon select"><svg><use href="#i-selpoly"/></svg></button>
      <button type="button" class="tb" aria-label="Upstream trace"><svg><use href="#i-sell1"/></svg></button>
      <button type="button" class="tb" aria-label="Downstream trace"><svg><use href="#i-sell2"/></svg></button>
      <i class="sep"></i>
      <button type="button" class="tb tb-on" aria-label="Long section" aria-pressed="true"><svg><use href="#i-long"/></svg><span class="callout"></span></button>
      <button type="button" class="tb" aria-label="Graph tool"><svg><use href="#i-gridcur"/></svg></button>
      <button type="button" class="tb" aria-label="Grid tool"><svg><use href="#i-tabcur"/></svg></button>
      <button type="button" class="tb" aria-label="Text tool"><svg><use href="#i-acur"/></svg></button>
      <i class="sep"></i>
      <button type="button" class="tb" aria-label="Measure"><svg><use href="#i-ruler"/></svg></button>
      <i class="sep"></i>
      <button type="button" class="tb dim" aria-label="Web map"><svg><use href="#i-globe"/></svg></button>
      <span class="combo combo-wide"><select aria-label="Object type"><option>Node</option></select><svg class="drop"><use href="#i-down"/></svg></span>
      <button type="button" class="tb dim" aria-label="New object"><svg><use href="#i-t1"/></svg></button>
      <button type="button" class="tb dim" aria-label="Edit geometry"><svg><use href="#i-t2"/></svg></button>
      <button type="button" class="tb dim" aria-label="Split link"><svg><use href="#i-t3"/></svg></button>
      <i class="sep"></i>
      <button type="button" class="tb dim" aria-label="Connectivity"><svg><use href="#i-clean"/></svg></button>
      <i class="sep"></i>
      <button type="button" class="tb" aria-label="Pan"><svg><use href="#i-hand"/></svg></button>
      <button type="button" class="tb" aria-label="Zoom in"><svg><use href="#i-zin"/></svg></button>
      <button type="button" class="tb" aria-label="Zoom out"><svg><use href="#i-zout"/></svg></button>
      <i class="sep"></i>
      <button type="button" class="tb" aria-label="Object properties"><svg><use href="#i-info"/></svg></button>
      <button type="button" class="tb dim" aria-label="Trace tool"><svg><use href="#i-purp"/></svg></button>
    </div>
    <div class="group"><i class="grip"></i>
      <button type="button" class="tb dim" aria-label="Go to start"><svg><use href="#i-rw"/></svg></button>
      <button type="button" class="tb dim" aria-label="Step back"><svg><use href="#i-bk"/></svg></button>
      <button type="button" class="tb dim" aria-label="Pause"><svg><use href="#i-pause"/></svg></button>
      <button type="button" class="tb" aria-label="Step forward"><svg><use href="#i-step"/></svg></button>
      <button type="button" class="tb" aria-label="Play"><svg><use href="#i-play"/></svg></button>
      <button type="button" class="tb" aria-label="Record"><svg><use href="#i-rec"/></svg></button>
      <button type="button" class="tb" aria-label="Loop"><svg><use href="#i-loop"/></svg></button>
      <button type="button" class="tb" aria-label="Go to end"><svg><use href="#i-ff"/></svg></button>
      <button type="button" class="tb" aria-label="Go to time"><svg><use href="#i-find"/></svg></button>
      <button type="button" class="tb" aria-label="Close results"><svg><use href="#i-stop"/></svg></button>
    </div>
  </div>

  <div class="work">
    <aside class="dock">
      <div class="dock-head"><i class="grip"></i><h2>Database [2024.1]</h2>
        <button type="button" aria-label="Float"><svg viewBox="0 0 10 10"><rect x="1.500" y="1.500" width="7" height="7" fill="none" stroke="#666"/></svg></button>
        <button type="button" aria-label="Close panel"><svg viewBox="0 0 10 10"><path d="M2 2l6 6M8 2L2 8" stroke="#111" stroke-width="1.600"/></svg></button>
      </div>
      <div class="dock-tools">
        <button type="button" class="tb" aria-label="Up"><svg><use href="#i-up"/></svg></button>
        <button type="button" class="tb" aria-label="Refresh"><svg><use href="#i-refresh"/></svg></button>
        <button type="button" class="tb" aria-label="List"><svg><use href="#i-list"/></svg></button>
        <button type="button" class="tb" aria-label="Details"><svg><use href="#i-cal"/></svg></button>
        <button type="button" class="tb" aria-label="Sort"><svg><use href="#i-sort"/></svg></button>
        <svg class="drop"><use href="#i-down"/></svg>
        <button type="button" class="tb" aria-label="Find"><svg><use href="#p-bino"/></svg></button>
        <svg class="drop"><use href="#i-down"/></svg>
        <button type="button" class="tb" aria-label="Dependencies"><svg><use href="#i-tree2"/></svg></button>
        <button type="button" class="tb" aria-label="Find in window"><svg><use href="#i-findwin"/></svg></button>
      </div>
      <ul class="tree">
        <li><svg class="ico"><use href="#i-database"/></svg>Database [2024.1]</li>
        <li><i class="cell elbow minus"></i><svg class="ico"><use href="#i-model"/></svg>TS Model</li>
        <li><i class="cell"></i><i class="cell tee"></i><svg class="ico"><use href="#i-net"/></svg>TS Network</li>
        <li><i class="cell"></i><i class="cell tee"></i><svg class="ico"><use href="#i-clock"/></svg>TS Control</li>
        <li><i class="cell"></i><i class="cell tee plus"></i><svg class="ico"><use href="#i-folddem"/></svg>Demand Diagram Group</li>
        <li><i class="cell"></i><i class="cell tee minus"></i><svg class="ico"><use href="#i-foldrun"/></svg>Run Group</li>
        <li><i class="cell"></i><i class="cell bar"></i><i class="cell elbow minus"></i><svg class="ico"><use href="#i-run"/></svg>TS-Pump Trip</li>
        <li><i class="cell"></i><i class="cell bar"></i><i class="cell"></i><i class="cell tee"></i><svg class="ico"><use href="#i-sim"/></svg>TS Control</li>
        <li><i class="cell"></i><i class="cell bar"></i><i class="cell"></i><i class="cell tee"></i><svg class="ico"><use href="#i-sim"/></svg>Transient Hydraulic Timestep</li>
        <li><i class="cell"></i><i class="cell bar"></i><i class="cell"></i><i class="cell elbow"></i><svg class="ico"><use href="#i-sim"/></svg>Transient</li>
        <li><i class="cell"></i><i class="cell elbow minus"></i><svg class="ico"><use href="#i-foldsel"/></svg>Selection List Group</li>
        <li class="current"><i class="cell"></i><i class="cell"></i><i class="cell elbow"></i><svg class="ico"><use href="#i-sel"/></svg>TS selection</li>
        <li><svg class="ico"><use href="#i-bin"/></svg>Recycle Bin</li>
      </ul>
    </aside>

    <main class="mdi">
      <div class="tabs">
        <button type="button" class="tab tab-on"><svg class="ico"><use href="#i-net"/></svg><span>TS-Pump Trip&gt;Transient</span></button>
        <button type="button" class="tab tab-surge"><svg class="ico"><use href="#i-surge"/></svg><span>TS-Pump Trip&gt;Transient: Surge Check</span></button>
        <button type="button" class="tab tab-long"><svg class="ico"><use href="#i-section"/></svg><span>TS Network (version 5) + TS Control (version 13</span></button>
      </div>

      <div class="desk">
        <section class="win win-active">
          <header class="win-head">
            <svg class="ico"><use href="#i-net"/></svg><h3>TS-Pump Trip&gt;Transient</h3>
            <button type="button" aria-label="Minimize"><svg><use href="#i-min"/></svg></button>
            <button type="button" aria-label="Maximize"><svg><use href="#i-max"/></svg></button>
            <button type="button" class="win-x" aria-label="Close"><svg><use href="#i-close"/></svg></button>
          </header>
          <div class="win-body">
            <svg class="canvas" viewBox="262 129 1287 344" preserveAspectRatio="xMinYMin slice">
              <g fill="none" stroke="#1c1c78">
                <path stroke-width="2" d="M262 288.500H802M802 289.500V163M736.500 288V259"/>
                <path stroke-width="1.200" d="M736 259L711 240M802 163.500H818L832 160L852 149.500H918.500V338.500L813 401L812 473M802 215.500L819.500 204M802 215.500H817M802 215.500L820 226"/>
              </g>
              <g fill="#98e486"><circle cx="801" cy="163.500" r="4"/><circle cx="818" cy="163" r="4"/><circle cx="833" cy="160" r="4"/><circle cx="852" cy="149" r="4"/><circle cx="866.500" cy="149" r="4"/><circle cx="819.500" cy="204" r="4"/><circle cx="817.500" cy="215.500" r="4"/><circle cx="820" cy="226" r="4"/><circle cx="801" cy="215.500" r="4"/><circle cx="917.500" cy="210.500" r="4"/><circle cx="801" cy="259" r="4"/><circle cx="736" cy="258.500" r="4"/><circle cx="736" cy="287.500" r="4"/><circle cx="711" cy="239.500" r="4"/></g>
              <circle cx="825" cy="161.500" r="5" fill="#fff" stroke="#8a1a1a"/><path d="M819.500 158l12 2.500-8 5z" fill="#8c1212"/>
              <circle cx="917.500" cy="305" r="6.500" fill="#fff" stroke="#dba467"/>
              <text x="917.500" y="308" class="meter">M</text>
              <g class="nodelabel">
                <text x="852" y="159">100748FR</text><text x="801" y="174">100947FR</text><text x="801" y="226">100949FR</text><text x="918" y="221">Surge Check</text><text x="711" y="250">KKR3PMPFR</text><text x="737" y="269">100953FR</text><text x="801" y="270">100948FR</text><text x="737" y="298">100951FR</text><text x="918" y="316">102180FR</text>
              </g>
              <g class="axis"><text x="267" y="463">5 m</text><text x="344" y="463">25 ft</text></g>
              <path d="M267 467h71M344 467h109" stroke="#7f7f7f" stroke-width="2"/>
            </svg>
            <output class="timer">00:00:00.0000</output>
            <div class="locator">
              <div class="locator-head"><span>Locator</span><button type="button" aria-label="Close locator"><svg viewBox="0 0 12 12"><path d="M4 4l4 4M8 4L4 8" stroke="#fff" stroke-width="1.500"/></svg></button></div>
              <svg class="locator-map" viewBox="0 0 68 33"><path d="M22 1.500h4l-1 3" stroke="#c8283c" stroke-width="1.500" fill="none"/><path d="M26 4l-1 7-2 15v5M22 26h4v5h-4z" stroke="#111" fill="none"/></svg>
            </div>
          </div>
        </section>

        <section class="win">
          <header class="win-head">
            <svg class="ico"><use href="#i-section"/></svg><h3>Long - TS Network (version 5) + TS Control (version 13)[Target]</h3>
            <button type="button" aria-label="Minimize"><svg><use href="#i-min"/></svg></button>
            <button type="button" aria-label="Maximize"><svg><use href="#i-max"/></svg></button>
            <button type="button" aria-label="Close"><svg><use href="#i-close"/></svg></button>
          </header>
          <div class="pagebar">
            <button type="button" class="tb" aria-label="Previous page"><svg><use href="#i-prev"/></svg></button>
            <span class="combo combo-page"><select aria-label="Page"><option>Page 1</option></select><svg class="drop"><use href="#i-down"/></svg></span>
            <button type="button" class="tb" aria-label="Next page"><svg><use href="#i-next"/></svg></button>
            <i class="sep"></i>
            <button type="button" class="tb" aria-label="Flip"><svg><use href="#i-flip"/></svg></button>
            <button type="button" class="tb" aria-label="Show extent"><svg><use href="#i-span"/></svg></button>
            <button type="button" class="tb" aria-label="New node grid"><svg><use href="#i-stargrid1"/></svg></button>
            <button type="button" class="tb" aria-label="New link grid"><svg><use href="#i-stargrid2"/></svg></button>
          </div>
          <div class="win-body">
            <svg class="canvas" viewBox="262 528 1287 325" preserveAspectRatio="xMinYMin slice">
              <path d="M341 805L681 798L881 792.500L1210 789L1218 788.500L1230 785L1276 663.500L1424 663L1476 662.500L1528 656.500H1532V807H341z" fill="#9d8469"/>
              <path d="M341 805L681 798L881 792.500L1210 789L1218 788.500L1230 785L1276 663.500L1424 663L1476 662.500L1528 656.500" fill="none" stroke="#b8a048"/>
              <path d="M334 574.500H1537M334 584.500H1537M334 606.500H1537M334 629.500H1537M334 651.500H1537M334 673.500H1537M334 696.500H1537M334 718.500H1537M334 740.500H1537M334 762.500H1537M334 785.500H1537" stroke="#555" stroke-opacity=".45" stroke-dasharray="2 1"/>
              <path d="M328 574.500h6M328 584.500h6M328 606.500h6M328 629.500h6M328 651.500h6M328 673.500h6M328 696.500h6M328 718.500h6M328 740.500h6M328 762.500h6M328 785.500h6M328 807.500h6M1537 574.500h7M1537 584.500h7M1537 606.500h7M1537 629.500h7M1537 651.500h7M1537 673.500h7M1537 696.500h7M1537 718.500h7M1537 740.500h7M1537 762.500h7M1537 785.500h7" stroke="#333"/>
              <path d="M341 807.500H1549" stroke="#555"/>
              <path d="M1276.500 664V766M1276.500 802V811M1424.500 663V766M1424.500 802V811M1475.500 663V766M1475.500 802V811M1527.500 657V766M1527.500 802V811M1529.500 657V811M1531.500 657V807M1210.500 790v20M1217.500 790v17M1230.500 786v24M681.500 807v4M881.500 807v4" stroke="#5c4a38" stroke-opacity=".8"/>
              <path d="M341 555.500H1533" stroke="#ee2a1a" stroke-width="2"/>
              <g fill="#fb1b08"><circle cx="341" cy="555.500" r="3.600"/><circle cx="681" cy="555.500" r="3.600"/><circle cx="1217.500" cy="555.500" r="3.600"/><circle cx="1229.500" cy="555.500" r="3.600"/><circle cx="1275.500" cy="555.500" r="3.600"/><circle cx="1424" cy="555.500" r="3.600"/><circle cx="1475.500" cy="555.500" r="3.600"/><circle cx="1527" cy="555.500" r="4.500"/><circle cx="1530" cy="555.500" r="5"/><rect x="1527" y="551" width="10" height="9"/></g>
              <path d="M877.500 552l7 7M884.500 552l-7 7M881 552v7" stroke="#d8281c"/>
              <circle cx="1210" cy="555.500" r="4.800" fill="#fff" stroke="#c8554a"/><path d="M1208 553v5M1212 553v5M1208 555.500h4" stroke="#5a1a14"/>
              <g fill="none" stroke="#5a5ae4" stroke-width="1.300">
                <path d="M341.500 575V806M681.500 601V804M881.500 616V794M1210.500 636V790M1217.500 637V789M1230.500 638V785M1276.500 640V664M1424.500 650V663M1475.500 654V663" stroke="#4040d4"/>
                <path d="M1206 790h8" stroke-width="2"/>
                <path d="M881 616L1210 627.500L1218 628L1230 631.500L1276 636.500L1424 632.500L1476 633.500L1527 639.500L1530.500 639.500L1531.500 657"/>
                <path d="M341 733.500L681 725.500L881 715.500L1210 688L1218 687L1272 675.500L1424 675L1476 673L1531 662"/>
                <path stroke="#1414c4" stroke-width="1.800" d="M341 575L681 601L881 616L1210 636L1276 640L1424 650L1476 653.500L1531 657"/>
              </g>
              <rect x="1528" y="657" width="6" height="6" fill="#6f6ff0" stroke="#33a"/>
              <g class="axis axis-y">
                <text x="327" y="577">305.0</text><text x="327" y="587">297.0</text><text x="327" y="609">277.0</text><text x="327" y="631">257.0</text><text x="327" y="653">237.0</text><text x="327" y="676">217.0</text><text x="327" y="699">197.0</text><text x="327" y="721">177.0</text><text x="327" y="743">157.0</text><text x="327" y="765">137.0</text><text x="327" y="788">117.0</text><text x="327" y="809">97.0</text>
              </g>
              <g class="axis">
                <text transform="translate(274 695) rotate(-90)">m AD</text>
                <text transform="translate(1279 800) rotate(-90)" class="vlabel">100235TO</text>
                <text transform="translate(1427 800) rotate(-90)" class="vlabel">100235FR</text>
                <text transform="translate(1479 800) rotate(-90)" class="vlabel">100172FR</text>
                <text transform="translate(1530 800) rotate(-90)" class="vlabel">102158FR</text>
                <text x="264" y="820">m</text><text x="269" y="836">Link</text><text x="269" y="849">Node</text>
                <text x="345" y="849">101375FR</text><text x="1257" y="849">100235TO</text>
              </g>
              <g class="axis axis-x">
                <text x="680" y="820">337</text><text x="880" y="820">534</text><text x="1209" y="820">859</text><text x="1229" y="820">879</text><text x="1275" y="820">925</text><text x="1423" y="820">1071</text><text x="1475" y="820">1122</text><text x="1526" y="820">1172</text>
                <text x="509" y="836">101375FR.101374FR.1</text><text x="780" y="836">101374FR.100686FR.1</text><text x="1044" y="836">100686FR.102235.1</text><text x="1223" y="836">-</text><text x="1252" y="836">-</text><text x="1348" y="836">100235FR.100235TO.1</text><text x="1449" y="836">-</text><text x="1501" y="836">-</text>
                <text x="680" y="849">101374FR</text><text x="880" y="849">100686FR</text><text x="1193" y="849">102235</text><text x="1229" y="849">-</text><text x="1423" y="849">100235FR</text><text x="1475" y="849">100172FR</text><text x="1520" y="849">-</text>
              </g>
              <path d="M262 827.500H1549M262 839.500H1549M341.500 827V839M681.500 824V839M881.500 824V839M1210.500 824V839M1217.500 827V839M1230.500 824V839M1276.500 824V839M1424.500 824V839M1475.500 824V839M1527.500 824V839M1529.500 827V839M1531.500 827V839M511.500 839V853M781.500 839V853M1045.500 839V853M1213.500 839V853M1224.500 839V853M1253.500 839V853M1350.500 839V853M1449.500 839V853M1501.500 839V853M1528.500 839V853M1530.500 839V853" stroke="#6a6a6a"/>
              <path d="M865 567v12.500l3-2.500 2.200 4.500 1.800-1-2-4.200h4z" fill="#fff" stroke="#555"/>
            </svg>
            <output class="timer">00:00:00.0000</output>
          </div>
        </section>
      </div>
    </main>
  </div>

  <footer class="status">
    <span>Ready - Press F1 for Help</span><span></span><span>Zoom (m): 23.65 [1:141]</span><span></span><span></span><span>READ</span><span class="off">CAP</span><span>NUM</span><span class="off">SCRL</span>
  </footer>
</div>
</body>
</html>
```
FILE: styles.css
```css
* { box-sizing: border-box; }
body {
  margin: 0;
  font: 9px/14px "Noto Sans", "Open Sans", sans-serif;
  color: #1e1e1e;
}
button {
  font: inherit;
  color: inherit;
  background: none;
  border: 0;
  padding: 0;
}
h1, h2, h3 { margin: 0; font-size: inherit; font-weight: normal; }
i { font-style: normal; }
svg { display: block; }
.defs { position: absolute; width: 0; height: 0; }
.glyph7 { font: bold 7px "Noto Sans", sans-serif; }

.app {
  height: 100vh;
  display: flex;
  flex-direction: column;
  background: #efefef;
  border: 4px solid #38383a;
  border-top-width: 3px;
  border-bottom-color: #1c1c1e;
  overflow: hidden;
}
.ico { width: 13px; height: 13px; flex: none; }

.titlebar {
  flex: none;
  display: flex;
  align-items: center;
  gap: 4px;
  height: 18px;
  padding-left: 1px;
  background: #fff;
}
.caption { display: flex; margin-left: auto; padding-right: 12px; gap: 25px; }
.caption svg { width: 12px; height: 12px; }

.menubar {
  flex: none;
  display: flex;
  align-items: center;
  gap: 13px;
  height: 20px;
  padding: 2px 0 0 6px;
}

.toolrow { flex: none; display: grid; height: 20px; padding-left: 2px; }
.toolrow-top { grid-template-columns: 302px 306px 229px 298px 1fr; }
.toolrow-mid { grid-template-columns: 406px 759px 1fr; }
.group { display: flex; align-items: center; min-width: 0; }
.grip {
  flex: none;
  width: 2px;
  height: 12px;
  margin-right: 1px;
  background: repeating-linear-gradient(#2c5f80 0 2px, transparent 2px 3px);
}
.sep {
  flex: none;
  width: 1px;
  height: 10px;
  margin: 0 2px;
  background: #5a9cc0;
}
.tb {
  flex: none;
  position: relative;
  display: grid;
  place-items: center;
  width: 22px;
  height: 17px;
}
.tb svg { width: 14px; height: 14px; }
.tb-slim { width: 18px; }
.dim svg { opacity: .55; }
.grey { color: #777; }
.teal { color: #2f9a86; }
.drop { flex: none; width: 8px; height: 8px; }
.tb-on { background: #dcebf5; border: 1px solid #3b7ea6; }
.callout {
  position: absolute;
  inset: -8px;
  border: 3px solid #d64a22;
  z-index: 3;
}
.combo {
  flex: none;
  display: flex;
  align-items: center;
  height: 15px;
  margin: 0 4px 0 1px;
  padding: 1px 2px;
  background: #f8f8f8;
}
.combo select {
  flex: 1;
  min-width: 0;
  height: 13px;
  margin-right: 3px;
  padding: 0;
  border: 0;
  background: #dedede;
  color: #222;
  font: 9px/13px "Noto Sans", sans-serif;
  appearance: none;
}
.combo-flag { width: 59px; }
.combo-flag select { background: #c9c9c9; }
.combo-wide { width: 105px; }
.combo-off select { background: #c9c9c9; color: #777; }
.combo-page { width: 60px; }
.combo-page select { margin-left: 2px; }

.work {
  flex: 1;
  min-height: 0;
  display: grid;
  grid-template-columns: 242px 1fr;
  column-gap: 7px;
  background: linear-gradient(90deg, #efefef 245px, #c3dcea 246px, #e4edf4 248px);
}
.dock { display: flex; flex-direction: column; min-height: 0; background: #fff; }
.dock-head {
  flex: none;
  display: flex;
  align-items: center;
  height: 19px;
  padding: 2px 3px 0 2px;
  background: #dfdfdf;
}
.dock-head h2 { flex: 1; margin-left: 5px; font-size: 10px; font-weight: bold; }
.dock-head svg { width: 10px; height: 10px; margin-left: 2px; }
.dock-tools {
  flex: none;
  display: flex;
  align-items: center;
  height: 23px;
  background: #efefef;
  border-bottom: 1px solid #777;
}
.dock-tools .tb { width: 18px; }
.dock-tools .tb svg { width: 13px; height: 13px; }

.tree {
  list-style: none;
  display: grid;
  grid-template-rows: repeat(13, 1fr);
  height: 200px;
  margin: 20px 0 0;
  padding: 0;
}
.tree li { position: relative; display: flex; align-items: center; padding-left: 1px; }
.tree .ico { margin-right: 2px; }
.tree .current { background: linear-gradient(90deg, transparent 32px, #f0f0f0 32px); }
.tree .current::after {
  content: "";
  position: absolute;
  inset: -3px 0 -3px 29px;
  border: 3px solid #d64a22;
}
.cell { position: relative; flex: none; align-self: stretch; width: 12px; }
.bar::before, .tee::before, .elbow::before {
  content: "";
  position: absolute;
  inset: 0 auto 0 5px;
  border-left: 1px dotted #a0a0a0;
}
.elbow::before { bottom: 50%; }
.tee, .elbow {
  background: repeating-linear-gradient(90deg, #a0a0a0 0 1px, transparent 1px 2px) 6px 50% / 6px 1px no-repeat;
}
.minus::after, .plus::after {
  content: "";
  position: absolute;
  left: 2px;
  top: 4px;
  width: 8px;
  height: 8px;
  border: 1px solid #a4a4a4;
  background: linear-gradient(#555, #555) 50% 50% / 4px 1px no-repeat, #fff;
}
.plus::after {
  background: linear-gradient(#555, #555) 50% 50% / 4px 1px no-repeat, linear-gradient(#555, #555) 50% 50% / 1px 4px no-repeat, #fff;
}

.mdi { display: flex; flex-direction: column; min-width: 0; min-height: 0; }
.tabs {
  flex: none;
  display: flex;
  height: 21px;
  background: #efefef;
  border-top: 1px solid #1f4a6b;
  border-bottom: 1px solid #3a4650;
}
.tab {
  display: flex;
  align-items: center;
  height: 19px;
  padding: 0 2px;
  white-space: nowrap;
}
.tab-on { width: 129px; padding-left: 4px; gap: 4px; background: #fafafa; border-right: 1px solid #aaa; }
.tab-surge { width: 177px; border-right: 1px solid #888; }
.tab-long { width: 213px; border-right: 1px solid #555; }
.tab-long span { margin-left: -3px; }

.desk {
  flex: 1;
  min-height: 0;
  display: grid;
  grid-template-rows: 377fr 379fr;
  gap: 1px;
  padding: 1px 0 2px 1px;
}
.win {
  display: flex;
  flex-direction: column;
  min-height: 0;
  padding: 0 6px 5px;
  border: 1px solid #3f5662;
  border-radius: 5px 5px 0 0;
  background: linear-gradient(#bccad8, #d7e4f2 24px);
}
.win-active { background: linear-gradient(#9bb4d1, #b4cae8 24px, #b4cfec); }
.win-head {
  flex: none;
  display: flex;
  align-items: center;
  gap: 3px;
  height: 24px;
  padding: 4px 1px 0;
  color: #8c98a6;
}
.win-active .win-head { color: #1e2a3a; }
.win-head h3 { flex: 1; }
.win-head button {
  display: grid;
  place-items: center;
  width: 25px;
  height: 15px;
  border: 1px solid #74859c;
  border-radius: 2px;
  background: linear-gradient(#d3deea, #b6c6da);
}
.win-head button svg { width: 14px; height: 14px; }
.win-active .win-x { background: linear-gradient(#e09a88, #bf4430); border-color: #6a2b22; }
.win-body {
  flex: 1;
  position: relative;
  min-height: 0;
  background: #fff;
  border: 1px solid #e6eef6;
  border-top-color: #77797c;
  border-left-color: #77797c;
}
.canvas { width: 100%; height: 100%; }
.timer {
  position: absolute;
  left: 1px;
  top: 1px;
  width: 102px;
  height: 13px;
  border: 1px solid #8b8b8b;
  border-radius: 4px;
  background: linear-gradient(#fff, #d4d4d4);
  font-size: 10px;
  line-height: 10px;
  text-align: center;
}
.locator {
  position: absolute;
  left: 0;
  top: 16px;
  width: 81px;
  padding: 0 6px 6px 5px;
  border: 1px solid #60666e;
  background: linear-gradient(#c8d3df, #dce8f4);
}
.locator-head {
  display: flex;
  align-items: center;
  justify-content: space-between;
  height: 24px;
  padding: 4px 1px 0 0;
  color: #8d99a6;
}
.locator-head button { background: #77838f; }
.locator-head svg { width: 12px; height: 12px; }
.locator-map { width: 100%; background: #bdbdbd; }

.pagebar {
  flex: none;
  display: flex;
  align-items: center;
  height: 21px;
  background: #efefef;
}
.pagebar .tb { width: 19px; }
.pagebar .tb svg { width: 13px; height: 13px; }

.nodelabel { font: bold 9px "DejaVu Sans Condensed", "DejaVu Sans", sans-serif; fill: #111; }
.meter { font: bold 8px "Noto Sans", sans-serif; fill: #dba467; text-anchor: middle; }
.axis { font: 9px "Noto Sans", "Open Sans", sans-serif; fill: #222; }
.axis-y { text-anchor: end; }
.axis-x { text-anchor: middle; }
.vlabel { font-size: 8px; }

.status {
  flex: none;
  display: grid;
  grid-template-columns: 1fr 135px 173px 80px 52px 30px 25px 29px 26px;
  align-items: center;
  height: 15px;
  padding-top: 2px;
  background: #333;
  color: #f0f0f0;
}
.status span {
  height: 11px;
  padding-left: 2px;
  border-left: 1px solid #b8d4e6;
  line-height: 11px;
  white-space: nowrap;
}
.status span:first-child { border-left: 0; padding-left: 1px; }
.status .off { color: #777; }
```
